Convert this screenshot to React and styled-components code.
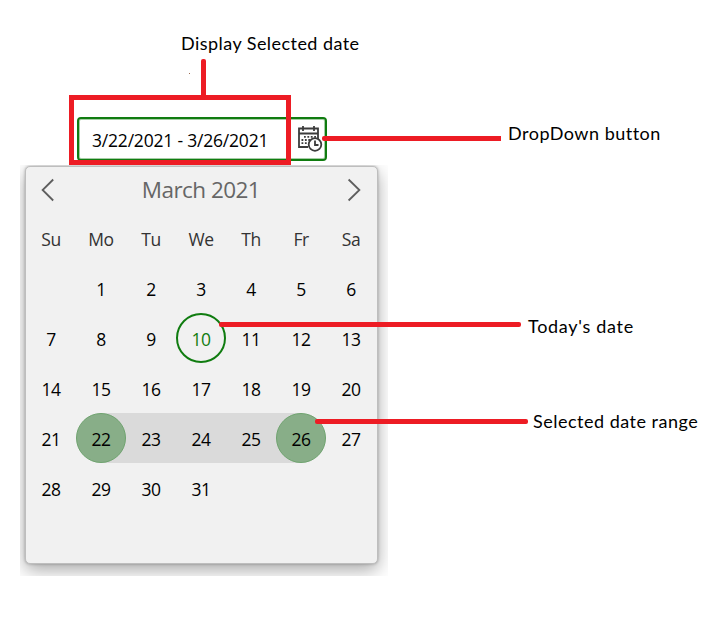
import React from "react";
import styled, { createGlobalStyle } from "styled-components";

const GlobalStyle = createGlobalStyle`
  body { margin: 0; background: #fff; }
  *, *::before, *::after { box-sizing: border-box; }
`;

const Page = styled.main`
  position: relative;
  width: 711px;
  height: 641px;
  padding: 117px 0 0 20px;
  overflow: hidden;
  font-family: "Open Sans", "Noto Sans", sans-serif;
  color: #000;
`;

const Field = styled.div`
  display: flex;
  align-items: center;
  justify-content: space-between;
  width: 250px;
  height: 44px;
  margin-left: 57px;
  padding: 0 2px 0 13px;
  border: 2px solid #107c10;
  border-radius: 4px;
  box-shadow: inset 0 0 0 1px #a5cda5;
  background: #fff;
`;

const FieldText = styled.span`
  padding-top: 2px;
  font-size: 17.5px;
  line-height: 24px;
  letter-spacing: ${(p) => p.$spacing}px;
  white-space: nowrap;
`;

const DropButton = styled.button`
  display: flex;
  padding: 0;
  border: 0;
  background: none;
`;

const PopupArea = styled.div`
  width: 368px;
  height: 411px;
  margin-top: 4px;
  padding: 1px 0 0 5px;
  overflow: hidden;
`;

const Calendar = styled.section`
  width: 353px;
  height: 398px;
  border: 1px solid #bebebe;
  border-radius: 5px;
  background: #f1f1f1;
  box-shadow: 0 0 3px rgba(0, 0, 0, 0.28), 0 6px 18px rgba(0, 0, 0, 0.34);
`;

const Header = styled.header`
  display: flex;
  align-items: center;
  justify-content: space-between;
  height: 46px;
  padding: 0 16px 0 14px;
`;

const NavButton = styled.button`
  display: flex;
  padding: 0;
  border: 0;
  background: none;
`;

const Month = styled.h1`
  margin: 0 0 0 1px;
  font-size: 22.5px;
  font-weight: 400;
  line-height: 30px;
  letter-spacing: -0.55px;
  color: #666;
`;

const Week = styled.div`
  display: grid;
  grid-template-columns: repeat(7, 50px);
  grid-auto-rows: 50px;
`;

const Cell = styled.div`
  display: flex;
  align-items: center;
  justify-content: center;
  padding: 2px 0 0 0;
  font-size: 17.5px;
  letter-spacing: -0.5px;
  color: ${(p) => (p.$weekday ? "#333" : "#000")};
`;

const RangeCell = styled(Cell)`
  background: ${(p) =>
    p.$edge === "start"
      ? "linear-gradient(90deg, transparent 50%, #dadada 50%)"
      : p.$edge === "end"
      ? "linear-gradient(90deg, #dadada 50%, transparent 50%)"
      : "#dadada"};
`;

const Disc = styled.span`
  display: flex;
  align-items: center;
  justify-content: center;
  width: 50px;
  height: 50px;
  margin: -2px 0 0 0;
  padding: 2px 0 0 0;
  border-radius: 50%;
  border: ${(p) => (p.$today ? "2px solid #107c10" : "1px solid #6fa36f")};
  background: ${(p) => (p.$today ? "transparent" : "#88ae88")};
  color: ${(p) => (p.$today ? "#107c10" : "#000")};
`;

const FieldMarker = styled.div`
  position: absolute;
  left: 69px;
  top: 95px;
  width: 222px;
  height: 70px;
  border: 5px solid #ed1c24;
`;

const Pointer = styled.div`
  position: absolute;
  left: ${(p) => p.$x}px;
  top: ${(p) => p.$y}px;
  width: ${(p) => p.$w}px;
  height: ${(p) => p.$h}px;
  border-radius: ${(p) => p.$radius || "2px"};
  background: #ed1c24;
`;

const Note = styled.div`
  position: absolute;
  left: ${(p) => p.$x}px;
  top: ${(p) => p.$y}px;
  font-family: Lato, "Open Sans", sans-serif;
  font-size: 18px;
  line-height: 24px;
  letter-spacing: ${(p) => p.$spacing}px;
  white-space: nowrap;
`;

const Speck = styled.i`
  position: absolute;
  left: 189px;
  top: 73px;
  width: 1px;
  height: 1px;
  background: #9b6b50;
`;

function CalendarClockIcon() {
  return (
    <svg width="26" height="28" viewBox="0 0 26 28" fill="none" stroke="#3c3c3c" strokeWidth="1.8">
      <path d="M11 22H2V3.5H21V14M2 8.5H21M6 1V6M17 1V6" />
      <path d="M7 11.8H19M4.5 15H14M4.5 18.2H11" strokeWidth="1.8" strokeDasharray="1.8 1.6" />
      <circle cx="18" cy="19.5" r="6.3" fill="#fff" />
      <path d="M18 15.5V20H21.5" />
    </svg>
  );
}

function Chevron({ flip }) {
  return (
    <svg width="14" height="24" viewBox="0 0 14 24" fill="none" stroke="#5e5e5e" strokeWidth="1.8">
      <path d={flip ? "M1.6 1.5L12.4 12L1.6 22.5" : "M13.2 1.5L2.6 12L13.2 22.5"} />
    </svg>
  );
}

const weekdays = ["Su", "Mo", "Tu", "We", "Th", "Fr", "Sa"];
const weeks = [0, 1, 2, 3, 4].map((w) => weekdays.map((_, d) => w * 7 + d));

function Day({ value }) {
  if (value < 1 || value > 31) return <Cell />;
  if (value === 10) return <Cell><Disc $today>{value}</Disc></Cell>;
  if (value === 22) return <RangeCell $edge="start"><Disc>{value}</Disc></RangeCell>;
  if (value === 26) return <RangeCell $edge="end"><Disc>{value}</Disc></RangeCell>;
  if (value > 22 && value < 26) return <RangeCell>{value}</RangeCell>;
  return <Cell>{value}</Cell>;
}

export default function App() {
  return (
    <>
      <GlobalStyle />
      <Page>
        <Field>
          <FieldText $spacing={-0.2}>3/22/2021 - 3/26/2021</FieldText>
          <DropButton aria-label="Open calendar"><CalendarClockIcon /></DropButton>
        </Field>
        <PopupArea>
          <Calendar>
            <Header>
              <NavButton aria-label="Previous month"><Chevron /></NavButton>
              <Month>March 2021</Month>
              <NavButton aria-label="Next month"><Chevron flip /></NavButton>
            </Header>
            <Week>
              {weekdays.map((d) => <Cell key={d} $weekday>{d}</Cell>)}
            </Week>
            {weeks.map((week) => (
              <Week key={week[0]}>
                {week.map((d) => <Day key={d} value={d} />)}
              </Week>
            ))}
          </Calendar>
        </PopupArea>
        <FieldMarker />
        <Speck />
        <Pointer $x={201} $y={59} $w={5} $h={38} />
        <Pointer $x={322} $y={136} $w={179} $h={5} $radius="2px 0 0 2px" />
        <Pointer $x={219} $y={322} $w={302} $h={5} />
        <Pointer $x={315} $y={419} $w={213} $h={5} />
        <Note $x={181} $y={31} $spacing={0.45}>Display Selected date</Note>
        <Note $x={508} $y={121} $spacing={0.5}>DropDown button</Note>
        <Note $x={528} $y={314} $spacing={0.7}>Today's date</Note>
        <Note $x={533} $y={409} $spacing={0.5}>Selected date range</Note>
      </Page>
    </>
  );
}
